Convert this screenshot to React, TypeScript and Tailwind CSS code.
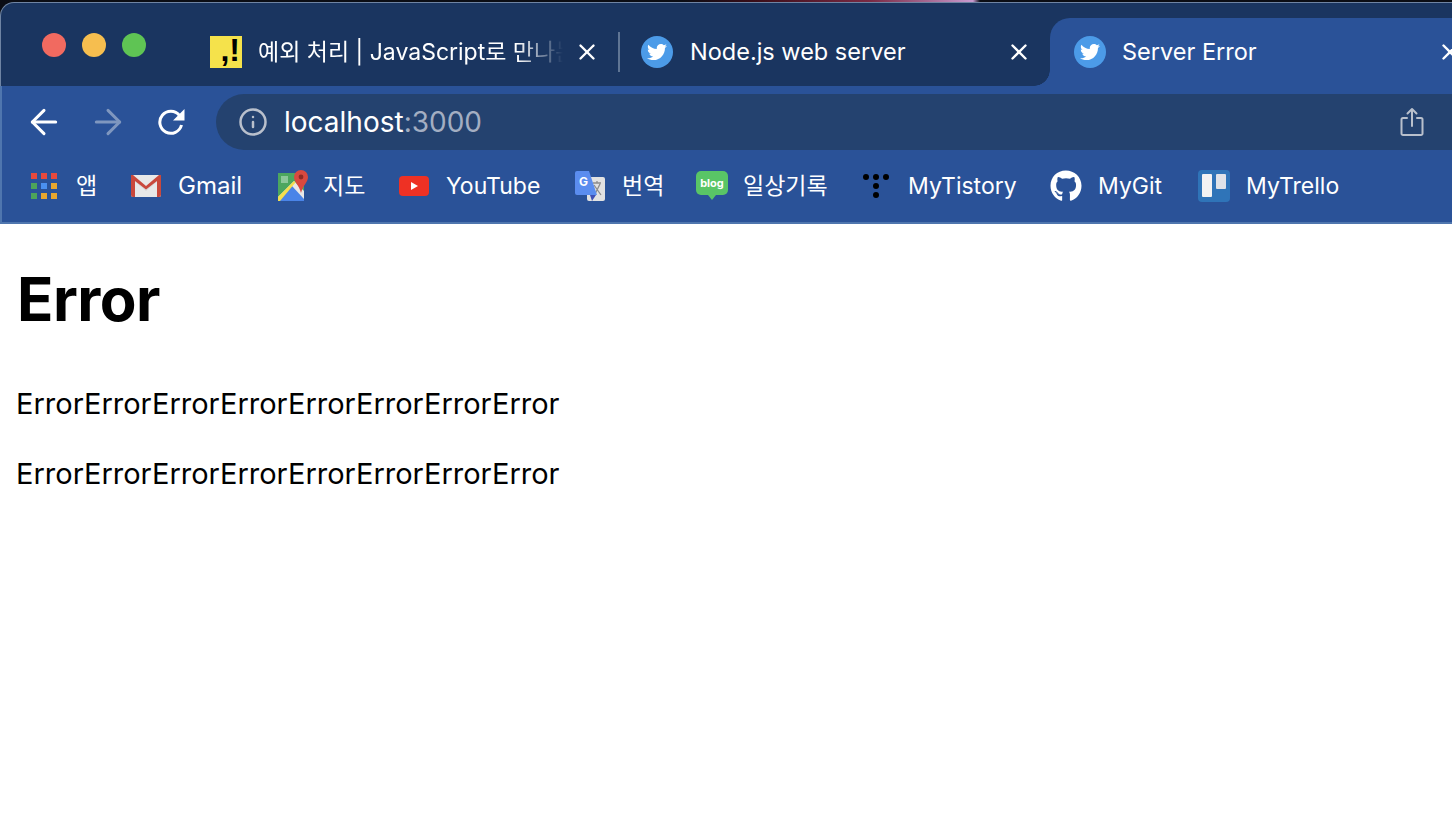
import { ArrowLeft, ArrowRight, Info, X } from "lucide-react";
import { FaGithub, FaTwitter } from "react-icons/fa";

const uiFont = "font-['Inter','Noto_Sans_CJK_KR',sans-serif]";

// Favicons for the tab strip
function JsInfoIcon() {
  return (
    <div className="w-[32px] h-[32px] shrink-0 bg-[#f5e24b] flex items-end justify-end pr-[2px] pb-[2px] text-black font-bold text-[32px] leading-[32px] font-['Liberation_Sans',sans-serif]">
      ,!
    </div>
  );
}

function TwitterIcon() {
  return (
    <div className="w-[32px] h-[32px] shrink-0 rounded-full bg-[#4c9be8] flex items-center justify-center text-white">
      <FaTwitter size={20} />
    </div>
  );
}

function ReloadIcon() {
  return (
    <svg width="28" height="28" viewBox="0 0 28 28" fill="none">
      <path d="M22.5 7.5 A11 11 0 1 0 24.5 17" stroke="#fff" strokeWidth="3" />
      <path d="M27.5 1 V12.5 H16 Z" fill="#fff" />
    </svg>
  );
}

function AppsIcon() {
  const colors = ["#e6493c", "#e6493c", "#e6493c", "#4ea45a", "#4a90f0", "#e8a72f", "#4ea45a", "#e8a72f", "#e8a72f"];
  return (
    <div className="grid grid-cols-3 gap-[4px] w-[26px]">
      {colors.map((c, i) => (
        <svg key={i} width="6" height="6">
          <rect width="6" height="6" fill={c} />
        </svg>
      ))}
    </div>
  );
}

function GmailIcon() {
  return (
    <svg width="30" height="24" viewBox="0 0 30 24">
      <rect x="0" y="1" width="30" height="22" rx="2" fill="#e8e8e8" />
      <path d="M3 3 L15 13 L27 3 V7 L15 17 L3 7 Z" fill="#d9d9d9" />
      <path d="M2 1 L15 12 L28 1 H30 V21 a2 2 0 0 1 -2 2 H26 V7 L15 15.5 L4 7 V23 H2 a2 2 0 0 1 -2 -2 V1 Z" fill="#c9483c" />
    </svg>
  );
}

function MapsIcon() {
  return (
    <svg width="30" height="32" viewBox="0 0 30 32">
      <rect x="0" y="3" width="26" height="28" fill="#4ca65f" />
      <path d="M0 27 L16 11 L26 21 V31 H0 Z" fill="#e8e8e8" />
      <path d="M0 31 L14 16 L26 29 V31 Z" fill="#4a84e8" />
      <path d="M0 27 L16 11 L17.5 12.5 L2 31 H0 Z" fill="#f4df4e" />
      <rect x="3" y="6" width="7" height="7" fill="#8cc79a" />
      <path d="M23 0 a7 7 0 0 1 7 7 c0 5 -5 8 -7 16 c-2 -8 -7 -11 -7 -16 a7 7 0 0 1 7 -7 Z" fill="#d8493f" />
      <circle cx="23" cy="7" r="2.4" fill="#8f2a24" />
    </svg>
  );
}

function YoutubeIcon() {
  return (
    <svg width="30" height="20" viewBox="0 0 30 20">
      <rect width="30" height="20" rx="4" fill="#ee3124" />
      <path d="M12 6 L19 10 L12 14 Z" fill="#fff" />
    </svg>
  );
}

function TranslateIcon() {
  return (
    <svg width="30" height="30" viewBox="0 0 30 30">
      <rect x="12" y="6" width="18" height="24" rx="2" fill="#e2e2e2" />
      <path d="M18 12 h8 M22 10 v2 M19.5 24 L25 13 M19 14 L26 24" stroke="#8c8c8c" strokeWidth="1.3" fill="none" />
      <path d="M15 24 L21 24 L17 30 Z" fill="#3f51b5" />
      <path d="M2 0 H14 L22 24 H2 a2 2 0 0 1 -2 -2 V2 a2 2 0 0 1 2 -2 Z" fill="#5b8def" />
      <text x="4" y="15" fontSize="12" fontWeight="700" fill="#fff" fontFamily="Inter, sans-serif">G</text>
    </svg>
  );
}

function BlogIcon() {
  return (
    <svg width="32" height="30" viewBox="0 0 32 30">
      <rect width="32" height="24" rx="5" fill="#59c566" />
      <path d="M12 24 H20 L16 29 Z" fill="#59c566" />
      <text x="16" y="16" textAnchor="middle" fontSize="11" fontWeight="700" fill="#fff" fontFamily="Inter, sans-serif">blog</text>
    </svg>
  );
}

function TistoryIcon() {
  return (
    <svg width="28" height="26" viewBox="0 0 28 26">
      <circle cx="4" cy="4" r="3" fill="#000" />
      <circle cx="14" cy="4" r="3" fill="#000" />
      <circle cx="24" cy="4" r="3" fill="#000" />
      <circle cx="14" cy="13" r="3" fill="#000" />
      <circle cx="14" cy="22" r="3" fill="#000" />
    </svg>
  );
}

function TrelloIcon() {
  return (
    <svg width="32" height="32" viewBox="0 0 32 32">
      <rect width="32" height="32" rx="4" fill="#2f74b8" />
      <rect x="4" y="4" width="10" height="23" rx="1" fill="#f3f3f3" />
      <rect x="18" y="4" width="10" height="15" rx="1" fill="#dfe3e8" />
    </svg>
  );
}

function ShareIcon() {
  return (
    <svg width="24" height="30" viewBox="0 0 24 30" fill="none" stroke="#b9c0cc" strokeWidth="2" strokeLinecap="round" strokeLinejoin="round">
      <path d="M7 11 H3 a1.5 1.5 0 0 0 -1.5 1.5 V26.5 A1.5 1.5 0 0 0 3 28 H21 a1.5 1.5 0 0 0 1.5 -1.5 V12.5 A1.5 1.5 0 0 0 21 11 H17" />
      <path d="M12 19 V2 M7.5 6.5 L12 2 L16.5 6.5" />
    </svg>
  );
}

function App() {
  return (
    <div className={`w-[1452px] h-[820px] overflow-hidden bg-white flex flex-col ${uiFont}`}>
      {/* Window top, desktop shows behind the rounded corner */}
      <div className="h-[86px] shrink-0 bg-[#0b0d14] flex flex-col">
        <div className="h-[2px] shrink-0 bg-[linear-gradient(to_right,#0b0d14_47%,#3a0d18_52%,#7a2a44_60%,#c99ad0_67%,#0b0d14_67.5%)]" />

        {/* Tab strip */}
        <div className="flex-1 bg-[#1a3560] flex items-end rounded-tl-[14px] border-t border-l border-[#6f84a3] text-white">
          <div className="flex items-center gap-[16px] pl-[41px] w-[209px] h-[68px] pb-[14px] shrink-0">
            <div className="w-[24px] h-[24px] rounded-full bg-[#f16a60]" />
            <div className="w-[24px] h-[24px] rounded-full bg-[#f6be4f]" />
            <div className="w-[24px] h-[24px] rounded-full bg-[#5fc454]" />
          </div>

          {/* Inactive tabs */}
          <div className="flex items-center w-[410px] h-[68px] shrink-0">
            <JsInfoIcon />
            <span className="ml-[16px] w-[306px] overflow-hidden whitespace-nowrap text-[23px] [mask-image:linear-gradient(to_right,black_85%,transparent_100%)]">
              예외 처리 | JavaScript로 만나는
            </span>
            <X className="ml-[11px] shrink-0" size={26} strokeWidth={2.2} />
            <div className="ml-[18px] w-[2px] h-[40px] bg-[#5f7594] shrink-0" />
          </div>
          <div className="flex items-center h-[68px] pl-[21px] w-[430px] shrink-0">
            <TwitterIcon />
            <span className="ml-[17px] w-[316px] whitespace-nowrap text-[23.5px]">Node.js web server</span>
            <X className="shrink-0" size={26} strokeWidth={2.2} />
          </div>

          {/* Active tab */}
          <div className="relative flex items-center h-[68px] flex-1 pl-[24px] rounded-tl-[20px] bg-[#2a5298] whitespace-nowrap before:absolute before:left-[-16px] before:bottom-0 before:w-[16px] before:h-[16px] before:bg-[radial-gradient(circle_at_0_0,transparent_15.5px,#2a5298_16px)]">
            <TwitterIcon />
            <span className="ml-[16px] w-[315px] text-[23.5px]">Server Error</span>
            <X className="shrink-0" size={26} strokeWidth={2.2} />
          </div>
        </div>
      </div>

      {/* Toolbar */}
      <div className="h-[64px] shrink-0 bg-[#2a5298] border-l-2 border-[#4f76ae] flex items-end">
        <div className="flex items-center h-[56px] w-[214px] pl-[22px] shrink-0 text-white">
          <ArrowLeft size={40} strokeWidth={1.8} />
          <ArrowRight size={40} strokeWidth={1.8} className="ml-[24px] text-[#7f97bf]" />
          <div className="ml-[29px]">
            <ReloadIcon />
          </div>
        </div>
        <div className="flex-1 h-[56px] bg-[#24426f] rounded-l-[28px] flex items-center pl-[22px] pr-[28px]">
          <Info size={30} strokeWidth={2} className="text-[#b9c0cc]" />
          <div className="ml-[16px] flex-1 text-[28px] text-white">
            localhost<span className="text-[#a3aec2]">:3000</span>
          </div>
          <ShareIcon />
        </div>
      </div>

      {/* Bookmarks bar */}
      <div className="h-[74px] shrink-0 bg-[#2a5298] border-l-2 border-b-2 border-[#4f76ae] flex items-center pl-[29px] text-white text-[23px] whitespace-nowrap">
        <div className="flex items-center w-[100px] shrink-0">
          <AppsIcon />
          <span className="ml-[19px]">앱</span>
        </div>
        <div className="flex items-center w-[147px] shrink-0">
          <GmailIcon />
          <span className="ml-[17px] text-[24px]">Gmail</span>
        </div>
        <div className="flex items-center w-[121px] shrink-0">
          <MapsIcon />
          <span className="ml-[15px]">지도</span>
        </div>
        <div className="flex items-center w-[176px] shrink-0">
          <YoutubeIcon />
          <span className="ml-[17px]">YouTube</span>
        </div>
        <div className="flex items-center w-[121px] shrink-0">
          <TranslateIcon />
          <span className="ml-[17px]">번역</span>
        </div>
        <div className="flex items-center w-[166px] shrink-0">
          <BlogIcon />
          <span className="ml-[15px]">일상기록</span>
        </div>
        <div className="flex items-center w-[188px] shrink-0">
          <TistoryIcon />
          <span className="ml-[18px]">MyTistory</span>
        </div>
        <div className="flex items-center w-[148px] shrink-0">
          <FaGithub size={32} />
          <span className="ml-[16px]">MyGit</span>
        </div>
        <div className="flex items-center shrink-0">
          <TrelloIcon />
          <span className="ml-[16px]">MyTrello</span>
        </div>
      </div>

      {/* Page content */}
      <div className="flex-1 bg-white text-black pl-[16px] pt-[38px]">
        <h1 className="ml-[1px] text-[60px] leading-[75px] font-bold tracking-[-0.5px]">Error</h1>
        <p className="mt-[50px] text-[29px] leading-[34px]">ErrorErrorErrorErrorErrorErrorErrorError</p>
        <p className="mt-[36px] text-[29px] leading-[34px]">ErrorErrorErrorErrorErrorErrorErrorError</p>
      </div>
    </div>
  );
}

export default App;
